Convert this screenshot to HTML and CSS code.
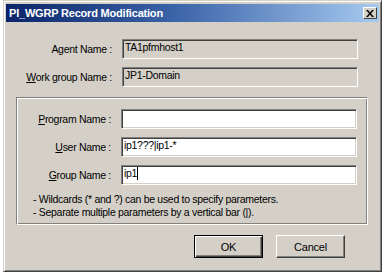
FILE: index.html
```html
<!DOCTYPE html>
<html lang="en">
<head>
  <meta charset="UTF-8">
  <title>PI_WGRP Record Modification</title>
  <link rel="stylesheet" href="styles.css">
</head>
<body>
  <div class="window">
    <!-- Title bar -->
    <div class="titlebar">
      <span class="title">PI_WGRP Record Modification</span>
      <div class="close">
        <svg width="8" height="7" viewBox="0 0 8 7">
          <path d="M0 0h2l2 2.5L6 0h2L5 3.5 8 7H6L4 4.5 2 7H0l3-3.5z" fill="#000"/>
        </svg>
      </div>
    </div>

    <!-- Fixed info -->
    <div class="info">
      <label>Agent Name :</label>
      <div class="field readonly">TA1pfmhost1</div>
      <label><u>W</u>ork group Name :</label>
      <div class="field readonly">JP1-Domain</div>
    </div>

    <!-- Editable group -->
    <div class="group">
      <div class="rows">
        <label><u>P</u>rogram Name :</label>
        <div class="field"></div>
        <label><u>U</u>ser Name :</label>
        <div class="field">ip1???|ip1-*</div>
        <label><u>G</u>roup Name :</label>
        <div class="field">ip1<span class="caret"></span></div>
      </div>
      <div class="notes">
        <div>- Wildcards (* and ?) can be used to specify parameters.</div>
        <div>- Separate multiple parameters by a vertical bar (|).</div>
      </div>
    </div>

    <!-- Buttons -->
    <div class="buttons">
      <button class="btn default">OK</button>
      <button class="btn">Cancel</button>
    </div>
  </div>
</body>
</html>
```

FILE: styles.css
```css
body {
  margin: 0;
  background: #fff;
  font-family: 'Liberation Sans', Arial, sans-serif;
  font-size: 10.5px;
  letter-spacing: -0.3px;
  color: #000;
}

/* Window frame */
.window {
  box-sizing: border-box;
  width: 379px;
  height: 272px;
  margin-left: 3px;
  background: #d4d0c8;
  border: 1px solid;
  border-color: #d4d0c8 #404040 #404040 #d4d0c8;
  box-shadow: inset 1px 1px 0 #fff, inset -1px -1px 0 #808080;
  padding: 2px;
}

/* Title bar */
.titlebar {
  height: 18px;
  margin-top: 1px;
  display: flex;
  align-items: center;
  justify-content: space-between;
  padding: 0 2px 0 3px;
  background: linear-gradient(to right, #0a246a, #3b63a8 45%, #a6caf0);
}

.title {
  color: #fff;
  font-weight: bold;
  font-size: 11px;
  letter-spacing: -0.2px;
}

.close {
  box-sizing: border-box;
  width: 14px;
  height: 12px;
  background: #d4d0c8;
  border: 1px solid;
  border-color: #fff #404040 #404040 #fff;
  display: flex;
  align-items: center;
  justify-content: center;
}

/* Label / field grids */
.info,
.rows {
  display: grid;
  grid-template-columns: 106px 236px;
  column-gap: 10px;
  row-gap: 8px;
  align-items: center;
}

.info {
  margin-top: 17px;
}

label {
  text-align: right;
}

.field {
  box-sizing: border-box;
  height: 20px;
  padding: 0 2px;
  line-height: 15px;
  background: #fff;
  border: 1px solid;
  border-color: #808080 #fff #fff #808080;
  box-shadow: inset 1px 1px 0 #404040, inset -1px -1px 0 #d4d0c8;
  white-space: nowrap;
}

.field.readonly {
  background: #d4d0c8;
}

.caret {
  display: inline-block;
  width: 1px;
  height: 13px;
  background: #000;
  vertical-align: -3px;
}

/* Group box */
.group {
  margin: 10px 11px 0 10px;
  height: 128px;
  box-sizing: border-box;
  border: 1px solid;
  border-color: #808080 #fff #fff #808080;
  box-shadow: inset 1px 1px 0 #fff, inset -1px -1px 0 #808080;
  padding: 11px 0 0 0;
}

.group .rows {
  grid-template-columns: 94px 236px;
}

.notes {
  margin: 8px 0 0 16px;
  line-height: 13px;
}

/* Buttons */
.buttons {
  display: flex;
  justify-content: flex-end;
  gap: 13px;
  margin: 10px 34px 0 0;
}

.btn {
  box-sizing: border-box;
  width: 69px;
  height: 23px;
  padding: 0;
  font-family: inherit;
  font-size: 11px;
  letter-spacing: -0.2px;
  background: #d4d0c8;
  border: 1px solid;
  border-color: #fff #404040 #404040 #fff;
  box-shadow: inset -1px -1px 0 #808080;
}

.btn.default {
  border: 1px solid #000;
  box-shadow: inset 1px 1px 0 #fff, inset -1px -1px 0 #404040, inset -2px -2px 0 #808080;
}
```
